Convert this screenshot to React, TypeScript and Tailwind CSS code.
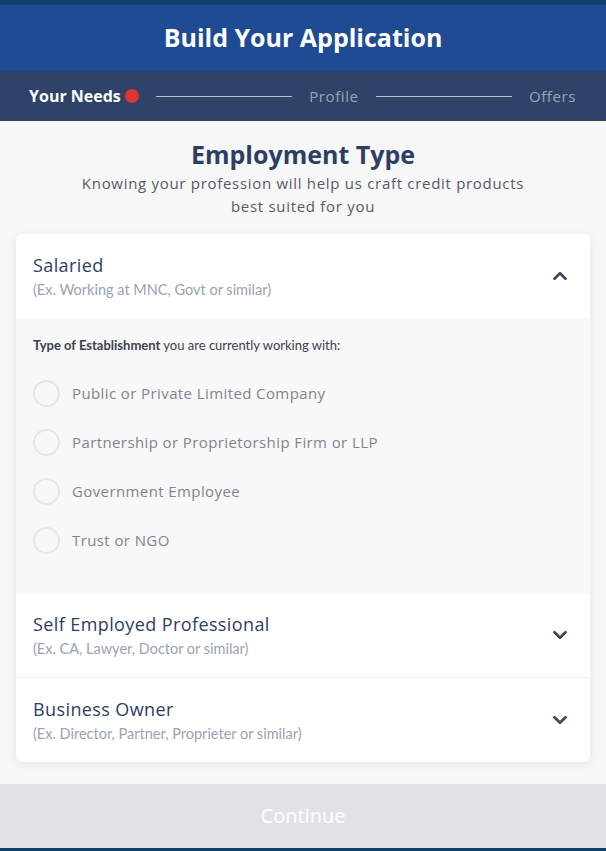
import { ChevronDown, ChevronUp } from "lucide-react";

const options = [
  "Public or Private Limited Company",
  "Partnership or Proprietorship Firm or LLP",
  "Government Employee",
  "Trust or NGO",
];

const heading = { fontFamily: '"Open Sans", "Noto Sans", sans-serif' };
const body = { fontFamily: 'Lato, "Noto Sans", sans-serif' };

function SectionHeader({ title, sub, open }: { title: string; sub: string; open?: boolean }) {
  return (
    <div className="flex h-[84px] items-center justify-between pl-[17px] pr-[19px]">
      <div className="flex flex-col">
        <div className="text-[18px] leading-[24px] tracking-[0.4px] text-[#2d3e63]" style={heading}>
          {title}
        </div>
        <div className="mt-[3px] text-[14.5px] leading-[20px] text-[#9aa3b2]" style={body}>
          {sub}
        </div>
      </div>
      {open ? (
        <ChevronUp className="h-[22px] w-[22px] text-[#3d4a5e]" strokeWidth={3} />
      ) : (
        <ChevronDown className="h-[22px] w-[22px] text-[#3d4a5e]" strokeWidth={3} />
      )}
    </div>
  );
}

export default function App() {
  return (
    <div className="flex min-h-[851px] w-full flex-col bg-[#f7f7f7]">
      <div className="h-[5px] bg-[#0d4168]" />
      <div className="flex h-[66px] items-center justify-center bg-[#1e4b94]">
        <h1 className="text-[25px] font-bold text-white" style={heading}>
          Build Your Application
        </h1>
      </div>
      <div className="flex h-[50px] items-center bg-[#2f4369] pl-[29px] pr-[30px]">
        <span className="text-[16px] font-bold text-white" style={heading}>
          Your Needs
        </span>
        <span className="ml-[4px] h-[14px] w-[14px] rounded-full bg-[#e0342c]" />
        <div className="mx-[17px] h-px flex-1 bg-[#b8bfcc]" />
        <span className="text-[15px] tracking-[0.6px] text-[#9aa5b8]" style={heading}>
          Profile
        </span>
        <div className="mx-[17px] h-px flex-1 bg-[#b8bfcc]" />
        <span className="text-[15px] tracking-[0.6px] text-[#9aa5b8]" style={heading}>
          Offers
        </span>
      </div>

      <div className="flex flex-col items-center pt-[17px]">
        <h2 className="text-[25px] font-bold leading-[32px] text-[#2d3e63]" style={heading}>
          Employment Type
        </h2>
        <p
          className="mt-[2px] w-[470px] text-center text-[15px] leading-[23px] tracking-[0.7px] text-[#555b66]"
          style={heading}
        >
          Knowing your profession will help us craft credit products best suited for you
        </p>
      </div>

      <div className="mx-[16px] mt-[16px] overflow-hidden rounded-[6px] bg-white shadow-[0_2px_10px_rgba(0,0,0,0.08)]">
        <SectionHeader title="Salaried" sub="(Ex. Working at MNC, Govt or similar)" open />
        <div className="bg-[#f8f8f8] pb-[39px] pl-[17px] pt-[18px]">
          <div className="text-[13px] leading-[18px] text-[#3a4150]" style={body}>
            <span className="font-bold">Type of Establishment</span> you are currently working with:
          </div>
          <div className="mt-[26px] flex flex-col gap-[22px]">
            {options.map((o) => (
              <label key={o} className="flex items-center gap-[12px]">
                <span className="h-[27px] w-[27px] rounded-full border-2 border-[#e6e6e6] bg-[#f8f8f8]" />
                <span className="text-[15px] tracking-[0.4px] text-[#808590]" style={heading}>
                  {o}
                </span>
              </label>
            ))}
          </div>
        </div>
        <SectionHeader title="Self Employed Professional" sub="(Ex. CA, Lawyer, Doctor or similar)" />
        <div className="h-px bg-[#f0f0f0]" />
        <SectionHeader title="Business Owner" sub="(Ex. Director, Partner, Proprieter or similar)" />
      </div>

      <div className="mt-[22px] flex h-[64px] items-center justify-center bg-[#dfe3e7]">
        <span className="text-[20px] text-white" style={heading}>
          Continue
        </span>
      </div>
      <div className="h-[3px] bg-[#0d4168]" />
    </div>
  );
}
